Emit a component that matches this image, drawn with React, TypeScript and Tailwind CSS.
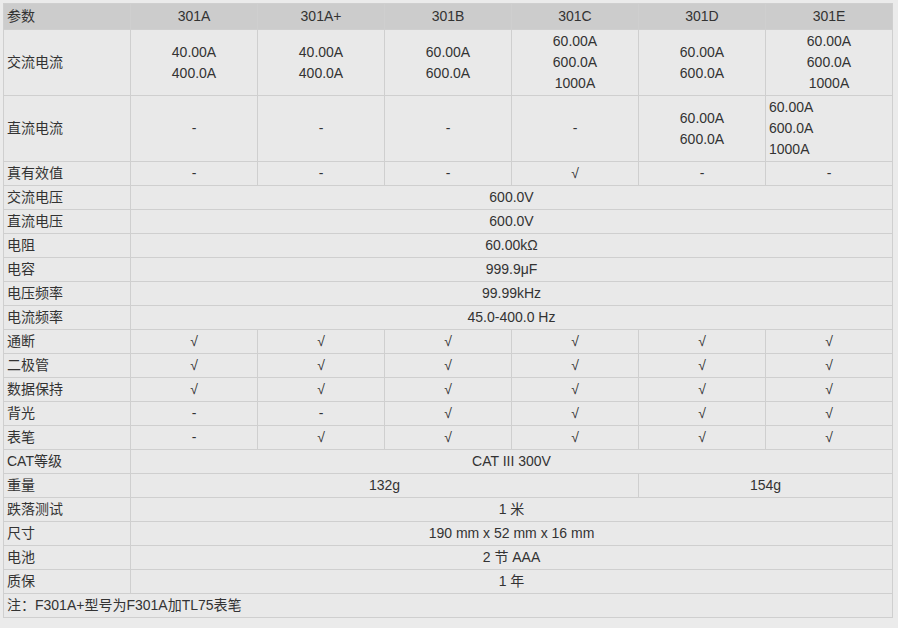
import React from 'react';

type Cell = { v: string[]; span?: number; left?: boolean };

const MODELS = ['301A', '301A+', '301B', '301C', '301D', '301E'];

const c = (v: string | string[], span = 1, left = false): Cell => ({
  v: Array.isArray(v) ? v : [v],
  span,
  left,
});

const all = (v: string) => [c(v, 6)];
const six = (vals: string[]) => vals.map((v) => c(v));

const ROWS: { label: string; cells: Cell[] }[] = [
  {
    label: '交流电流',
    cells: [
      c(['40.00A', '400.0A']),
      c(['40.00A', '400.0A']),
      c(['60.00A', '600.0A']),
      c(['60.00A', '600.0A', '1000A']),
      c(['60.00A', '600.0A']),
      c(['60.00A', '600.0A', '1000A']),
    ],
  },
  {
    label: '直流电流',
    cells: [
      c('-'),
      c('-'),
      c('-'),
      c('-'),
      c(['60.00A', '600.0A']),
      c(['60.00A', '600.0A', '1000A'], 1, true),
    ],
  },
  { label: '真有效值', cells: six(['-', '-', '-', '√', '-', '-']) },
  { label: '交流电压', cells: all('600.0V') },
  { label: '直流电压', cells: all('600.0V') },
  { label: '电阻', cells: all('60.00kΩ') },
  { label: '电容', cells: all('999.9μF') },
  { label: '电压频率', cells: all('99.99kHz') },
  { label: '电流频率', cells: all('45.0-400.0 Hz') },
  { label: '通断', cells: six(['√', '√', '√', '√', '√', '√']) },
  { label: '二极管', cells: six(['√', '√', '√', '√', '√', '√']) },
  { label: '数据保持', cells: six(['√', '√', '√', '√', '√', '√']) },
  { label: '背光', cells: six(['-', '-', '√', '√', '√', '√']) },
  { label: '表笔', cells: six(['-', '√', '√', '√', '√', '√']) },
  { label: 'CAT等级', cells: all('CAT III 300V') },
  { label: '重量', cells: [c('132g', 4), c('154g', 2)] },
  { label: '跌落测试', cells: all('1 米') },
  { label: '尺寸', cells: all('190 mm x 52 mm x 16 mm') },
  { label: '电池', cells: all('2 节 AAA') },
  { label: '质保', cells: all('1 年') },
];

export default function App() {
  return (
    <div className="min-h-screen bg-[#ebebeb] pt-[3px] pl-[3px] font-['Liberation_Sans','Noto_Sans_CJK_SC',sans-serif] text-[14px] leading-[21px] text-[#333]">
      <table className="table-fixed border-collapse w-[890px] bg-[#e9e9e9]">
        <colgroup>
          {Array.from({ length: 7 }).map((_, i) => (
            <col key={i} className="w-[127px]" />
          ))}
        </colgroup>
        <thead>
          <tr className="bg-[#cccccc]">
            <th className="border border-[#cfcfcf] px-[3px] py-[2px] text-left font-normal">参数</th>
            {MODELS.map((m) => (
              <th key={m} className="border border-[#cfcfcf] px-[3px] py-[2px] text-center font-normal">
                {m}
              </th>
            ))}
          </tr>
        </thead>
        <tbody>
          {ROWS.map((row) => (
            <tr key={row.label}>
              <td className="border border-[#cfcfcf] px-[3px] py-px">{row.label}</td>
              {row.cells.map((cell, i) => (
                <td
                  key={i}
                  colSpan={cell.span}
                  className={
                    cell.left
                      ? 'border border-[#cfcfcf] px-[3px] py-px text-left'
                      : 'border border-[#cfcfcf] px-[3px] py-px text-center'
                  }
                >
                  {cell.v.map((line, j) => (
                    <div key={j}>{line}</div>
                  ))}
                </td>
              ))}
            </tr>
          ))}
          <tr>
            <td colSpan={7} className="border border-[#cfcfcf] px-[3px] py-px">
              注：F301A+型号为F301A加TL75表笔
            </td>
          </tr>
        </tbody>
      </table>
    </div>
  );
}
